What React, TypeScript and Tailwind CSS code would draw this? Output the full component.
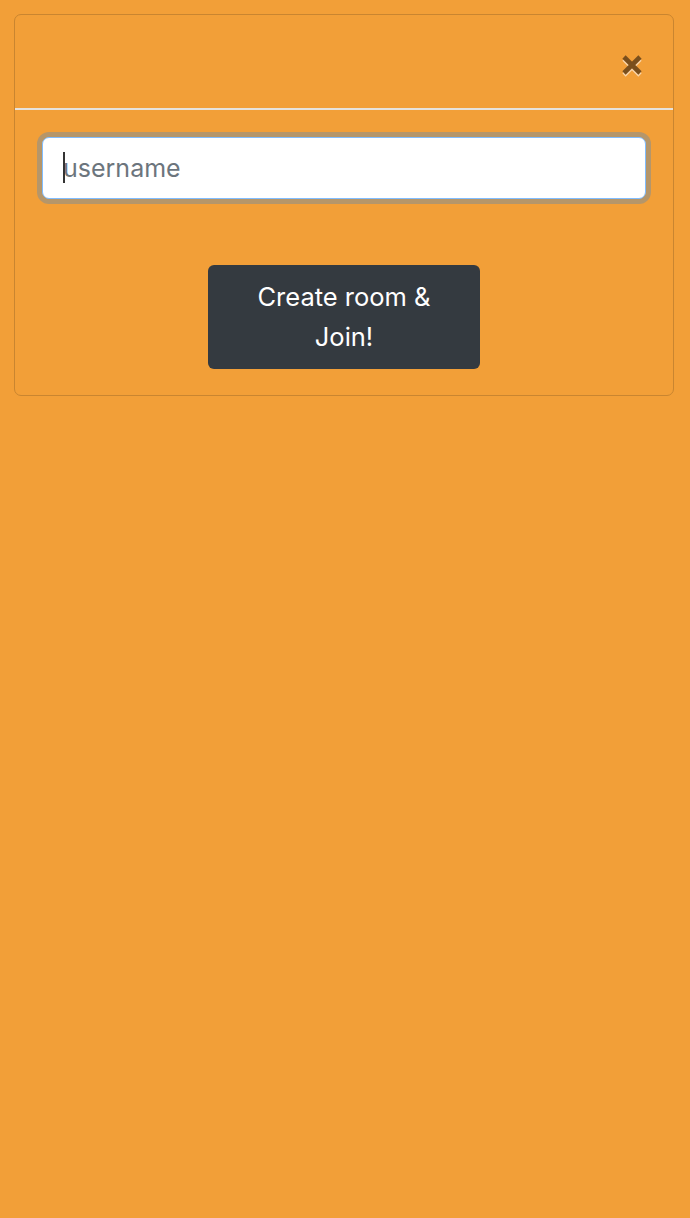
import React from "react";

export default function App() {
  return (
    <div
      className="min-h-screen w-full bg-[#f29f38] pt-[14px] px-[14px]"
      style={{ fontFamily: "Inter, 'Noto Sans', sans-serif" }}
    >
      <div className="w-[660px] rounded-[7px] border border-[#c98530] bg-[#f29f38]">
        <div className="box-content flex h-[93px] items-start justify-end border-b-2 border-[#e6e2dc] pr-[29px] pt-0">
          <button className="relative mt-[38px] flex h-[24px] w-[24px] items-center justify-center" aria-label="Close">
            <svg width="24" height="24" viewBox="0 0 24 24" className="absolute left-0 top-[1.5px]">
              <path d="M4 4 L20 20 M20 4 L4 20" stroke="#fbd6a8" strokeWidth="4.6" fill="none" />
            </svg>
            <svg width="24" height="24" viewBox="0 0 24 24" className="absolute left-0 top-0">
              <path d="M4 4 L20 20 M20 4 L4 20" stroke="#7a4f1d" strokeWidth="4.6" fill="none" />
            </svg>
          </button>
        </div>
        <div className="px-[27px] pt-[27px] pb-[26px]">
          <div className="relative">
            <input
              type="text"
              placeholder="username"
              className="block h-[62px] w-full rounded-[7px] border-[1.5px] border-[#80bdff] bg-white pl-[20px] text-[25px] text-[#495057] outline-none shadow-[0_0_0_5px_rgba(0,123,255,0.25)] placeholder:text-[#6c757d]"
            />
            <span className="pointer-events-none absolute left-[21px] top-[15px] h-[31px] w-[1.5px] bg-[#333]" />
          </div>
          <div className="mt-[66px] flex justify-center">
            <button className="w-[272px] rounded-[6px] bg-[#343a40] px-[40px] py-[12px] text-center text-[25.5px] leading-[40px] text-white">
              Create room &amp; Join!
            </button>
          </div>
        </div>
      </div>
    </div>
  );
}
